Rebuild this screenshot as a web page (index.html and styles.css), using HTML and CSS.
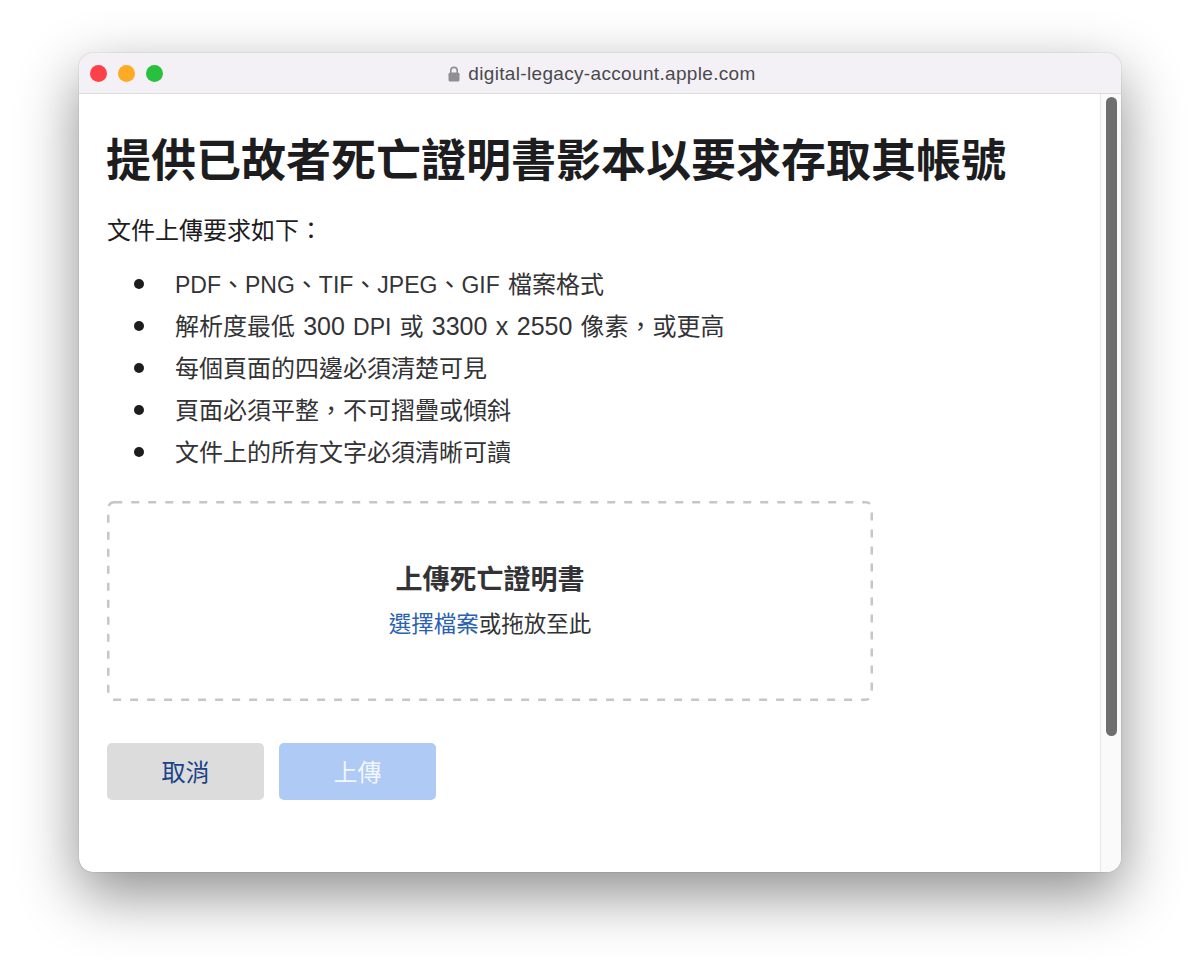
FILE: index.html
```html
<!DOCTYPE html>
<html lang="zh-Hant">
  <head>
    <meta charset="utf-8">
    <title>digital-legacy-account.apple.com</title>
    <link rel="stylesheet" href="styles.css">
  </head>
  <body>
    <div class="window">
      <div class="titlebar">
        <div class="lights">
          <span class="light red"></span>
          <span class="light yellow"></span>
          <span class="light green"></span>
        </div>
        <div class="address">
          <svg class="lock" width="12" height="16" viewBox="0 0 12 16">
            <path d="M2.8 7V4.6a3.2 3.2 0 0 1 6.4 0V7" fill="none" stroke="#8f8f92" stroke-width="1.6"/>
            <rect x="0.5" y="6.6" width="11" height="9" rx="1.6" fill="#8f8f92"/>
          </svg>
          <span>digital-legacy-account.apple.com</span>
        </div>
      </div>
      <div class="viewport">
        <div class="content">
          <h1>提供已故者死亡證明書影本以要求存取其帳號</h1>
          <p class="intro">文件上傳要求如下：</p>
          <ul class="rules">
            <li><span class="latin">PDF</span>、<span class="latin">PNG</span>、<span class="latin">TIF</span>、<span class="latin">JPEG</span>、<span class="latin">GIF</span> 檔案格式</li>
            <li>解析度最低 <span class="num">300</span> <span class="latin">DPI</span> 或 <span class="num">3300 x 2550</span> 像素，或更高</li>
            <li>每個頁面的四邊必須清楚可見</li>
            <li>頁面必須平整，不可摺疊或傾斜</li>
            <li>文件上的所有文字必須清晰可讀</li>
          </ul>
          <div class="dropzone">
            <svg class="dashes" width="766" height="200">
              <rect x="1.25" y="1.25" width="763.5" height="197.5" rx="6" fill="none" stroke="#c6c6c6" stroke-width="2.5" stroke-dasharray="8 9"/>
            </svg>
            <h2>上傳死亡證明書</h2>
            <p><a href="#">選擇檔案</a>或拖放至此</p>
          </div>
          <div class="actions">
            <button class="btn cancel">取消</button>
            <button class="btn upload">上傳</button>
          </div>
        </div>
        <div class="scrollbar">
          <div class="thumb"></div>
        </div>
      </div>
    </div>
  </body>
</html>
```

FILE: styles.css
```css
* {
  box-sizing: border-box;
}

body {
  margin: 0;
  height: 976px;
  padding: 53px 79px 0;
  background-color: #ffffff;
  color: #1d1d1f;
  font-family: "Liberation Sans", "Noto Sans CJK TC", sans-serif;
  overflow: hidden;
}

.window {
  height: 819px;
  border-radius: 14px;
  background-color: #ffffff;
  box-shadow: 0 0 1px rgba(0, 0, 0, 0.5), 0 22px 60px rgba(0, 0, 0, 0.45);
  display: flex;
  flex-direction: column;
  overflow: hidden;
}

.titlebar {
  height: 41px;
  flex: none;
  background-color: #f3f1f5;
  border-bottom: 1px solid #dcdcdc;
  position: relative;
  display: flex;
  align-items: center;
  justify-content: center;
}

.lights {
  position: absolute;
  left: 11px;
  top: 12px;
  display: flex;
  gap: 11px;
}

.light {
  width: 17px;
  height: 17px;
  border-radius: 50%;
}

.red {
  background-color: #fd4148;
}

.yellow {
  background-color: #fdaa24;
}

.green {
  background-color: #2ac03f;
}

.address {
  display: flex;
  align-items: center;
  gap: 8px;
  font-size: 19px;
  letter-spacing: 0.33px;
  color: #4a4a4d;
  margin: 2px 0 0 4px;
}

.viewport {
  flex: 1;
  display: flex;
  min-height: 0;
}

.content {
  flex: 1;
  padding: 38px 28px 0;
}

h1 {
  margin: 0 0 0 -1px;
  font-size: 45px;
  line-height: 60px;
  font-weight: 700;
}

.intro {
  margin: 22px 0 0;
  font-size: 24px;
  line-height: 34px;
}

.rules {
  margin: 16px 0 0;
  padding: 0;
  list-style: none;
  font-size: 24px;
  line-height: 42px;
  word-spacing: 1.5px;
  color: #333336;
}

.rules li::before {
  content: "";
  display: inline-block;
  width: 10px;
  height: 10px;
  margin: 0 31px 5px 27px;
  border-radius: 50%;
  background-color: #1d1d1f;
  vertical-align: middle;
}

.latin {
  font-size: 23px;
}

.num {
  font-size: 25px;
  line-height: 1;
}

.dropzone {
  position: relative;
  width: 766px;
  height: 200px;
  margin-top: 27px;
  padding-top: 57px;
  text-align: center;
}

.dashes {
  position: absolute;
  left: 0;
  top: 0;
}

h2 {
  margin: 0;
  font-size: 27px;
  line-height: 44px;
  font-weight: 700;
  color: #333336;
}

.dropzone p {
  margin: 0;
  font-size: 22.5px;
  line-height: 45px;
  color: #333336;
}

.dropzone a {
  color: #2a62b0;
  text-decoration: none;
}

.actions {
  display: flex;
  gap: 15px;
  margin-top: 42px;
}

.btn {
  width: 157px;
  height: 57px;
  border: none;
  border-radius: 5px;
  padding: 0 0 2px;
  font-family: inherit;
  font-size: 24px;
}

.cancel {
  background-color: #dcdcdc;
  color: #1a4388;
}

.upload {
  background-color: #aecaf5;
  color: rgba(255, 255, 255, 0.85);
}

.scrollbar {
  width: 21px;
  flex: none;
  background-color: #fafafa;
  border-left: 1px solid #e6e6e6;
  padding: 3px 4px 0 5px;
}

.thumb {
  height: 639px;
  border-radius: 6px;
  background-color: #6e6e6e;
}
```
